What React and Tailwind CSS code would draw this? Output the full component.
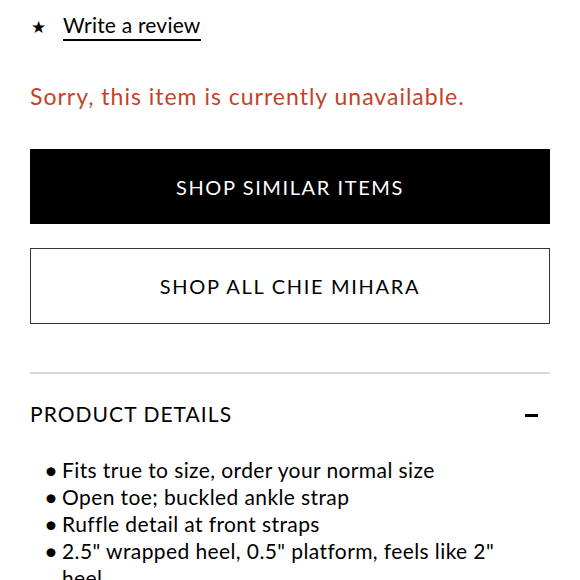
import React from 'react';

const details = [
  'Fits true to size, order your normal size',
  'Open toe; buckled ankle strap',
  'Ruffle detail at front straps',
  '2.5" wrapped heel, 0.5" platform, feels like 2" heel',
];

const App = () => {
  return (
    <div className="w-[580px] h-[580px] overflow-hidden bg-white text-black font-['Lato','Noto_Sans',sans-serif]">
      <div className="px-[30px]">
        {/* Review link */}
        <div className="flex items-center pt-[11px] h-[42px]">
          <span className="text-[17px] leading-none w-[33px] pl-[1px]">★</span>
          <a className="text-[21px] leading-[26px] tracking-[0.2px] border-b-2 border-black pb-[1px]">Write a review</a>
        </div>

        {/* Availability */}
        <p className="mt-[40px] text-[23px] leading-[28px] text-[#c2432a] tracking-[1px]">
          Sorry, this item is currently unavailable.
        </p>

        {/* Actions */}
        <button className="mt-[39px] w-full h-[75px] bg-black text-white text-[20px] tracking-[1.6px]">
          SHOP SIMILAR ITEMS
        </button>
        <button className="mt-[24px] w-full h-[76px] border border-[#333] bg-white text-black text-[20px] tracking-[1.7px]">
          SHOP ALL CHIE MIHARA
        </button>

        <div className="mt-[48px] h-[2px] bg-[#d9d9d9]" />

        {/* Product details */}
        <div className="flex items-center justify-between h-[30px] mt-[25px]">
          <h2 className="text-[21px] tracking-[1.05px]">PRODUCT DETAILS</h2>
          <span className="block w-[13px] h-[3px] bg-black mr-[12px] mt-[2px]" />
        </div>

        <ul className="mt-[27px] text-[21px] leading-[27px] tracking-[0.4px]">
          {details.map((d) => (
            <li key={d} className="flex">
              <span className="w-[32px] pl-[14px] shrink-0 text-[24px] leading-[27px]">•</span>
              <span className="pr-[20px]">{d}</span>
            </li>
          ))}
        </ul>
      </div>
    </div>
  );
};

export default App;
